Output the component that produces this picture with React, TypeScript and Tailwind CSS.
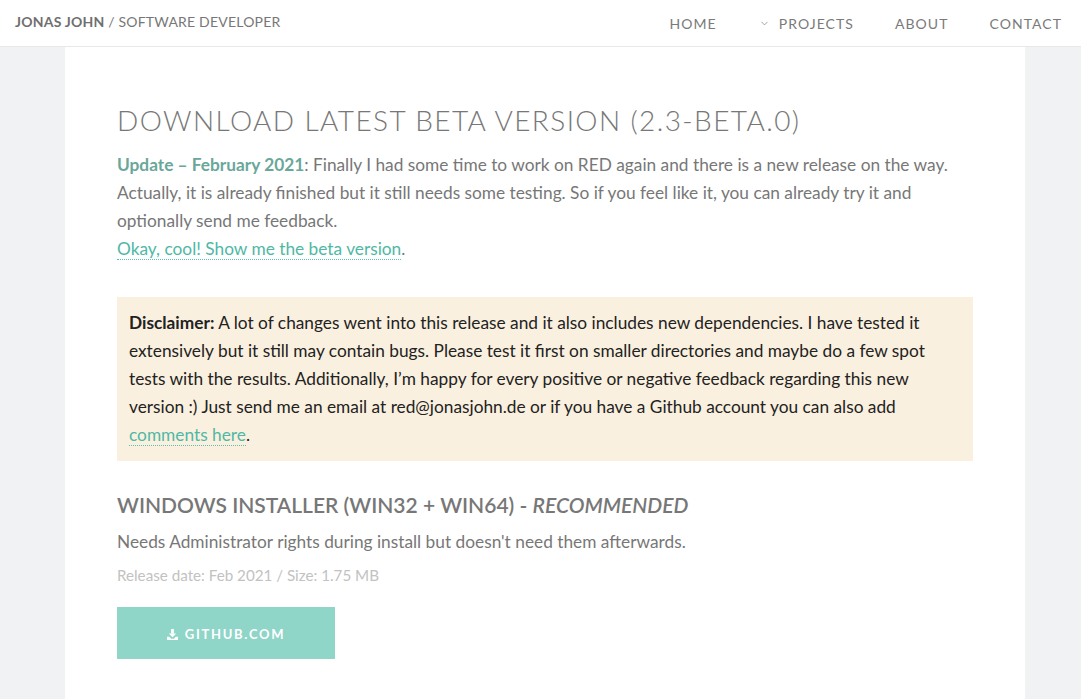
import { ChevronDown } from "lucide-react";

const font = { fontFamily: "Lato, 'Open Sans', sans-serif" };

function DownloadIcon() {
  return (
    <svg viewBox="0 0 12 12" className="h-[11px] w-[11px]" fill="currentColor">
      <rect x="4.5" y="0" width="3" height="5" />
      <path d="M2 5h8L6 9z" />
      <path d="M0 8.5h2.5L4.5 10.5h3l2-2H12V12H0z" />
    </svg>
  );
}

export default function App() {
  return (
    <div className="min-h-screen bg-[#f1f2f4] text-[#777]" style={font}>
      <header className="flex h-[47px] items-center justify-between border-b border-[#e8e8ea] bg-white pl-[15px] pr-[19px]">
        <div className="-mt-[4px] text-[14px] tracking-[0.2px] text-[#777]">
          <span className="font-bold text-[#6f6f6f]">JONAS JOHN</span>
          <span> / SOFTWARE DEVELOPER</span>
        </div>
        <nav className="flex items-center text-[14px] tracking-[1.05px] text-[#7a7a7a]">
          <a className="mr-[42px]">HOME</a>
          <a className="mr-[41px] flex items-center">
            <ChevronDown className="mr-[9px] h-[11px] w-[11px]" strokeWidth={1.5} />
            PROJECTS
          </a>
          <a className="mr-[41px]">ABOUT</a>
          <a>CONTACT</a>
        </nav>
      </header>

      <main className="ml-[65px] w-[960px] bg-white px-[52px] pb-[60px] pt-[53px]">
        <h1 className="text-[28px] font-light leading-[40px] tracking-[1.4px] text-[#777]">
          DOWNLOAD LATEST BETA VERSION (2.3-BETA.0)
        </h1>
        <p className="mt-[11px] text-[17.3px] leading-[28px]">
          <strong className="font-bold text-[#6aa79a]">Update – February 2021</strong>: Finally I had some
          time to work on RED again and there is a new release on the way. Actually, it is already finished
          but it still needs some testing. So if you feel like it, you can already try it and optionally send
          me feedback.
          <br />
          <a className="border-b border-dotted border-[#5fbfae] text-[#4fb8a5]">
            Okay, cool! Show me the beta version
          </a>
          .
        </p>

        <div className="mt-[34px] bg-[#faf0df] px-[12px] py-[12px] text-[17.3px] leading-[28px] text-[#222]">
          <strong className="font-bold">Disclaimer:</strong> A lot of changes went into this release and it
          also includes new dependencies. I have tested it extensively but it still may contain bugs. Please
          test it first on smaller directories and maybe do a few spot tests with the results. Additionally,
          I’m happy for every positive or negative feedback regarding this new version :) Just send me an
          email at red@jonasjohn.de or if you have a Github account you can also add{" "}
          <a className="border-b border-dotted border-[#5fbfae] text-[#4fb8a5]">comments here</a>.
        </div>

        <h3 className="mt-[30px] text-[21px] font-semibold leading-[28px] text-[#777]">
          WINDOWS INSTALLER (WIN32 + WIN64) - <em className="italic">RECOMMENDED</em>
        </h3>
        <p className="mt-[9px] text-[17.3px] leading-[28px]">
          Needs Administrator rights during install but doesn't need them afterwards.
        </p>
        <p className="mt-[9px] text-[15.2px] leading-[20px] text-[#c2c2c2]">
          Release date: Feb 2021 / Size: 1.75 MB
        </p>
        <button className="mt-[22px] flex h-[52px] w-[218px] items-center justify-center gap-[7px] bg-[#8fd5c8] pt-[3px] text-[13px] font-bold tracking-[1.7px] text-white">
          <DownloadIcon />
          GITHUB.COM
        </button>
      </main>
    </div>
  );
}
